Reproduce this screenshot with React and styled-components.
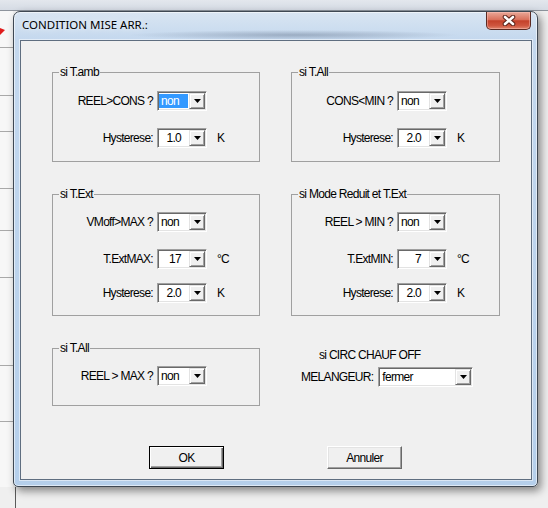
import React from "react"
import styled, { createGlobalStyle, css } from "styled-components"

const GlobalStyle = createGlobalStyle`
  html, body {
    margin: 0;
    padding: 0;
  }
  body {
    width: 548px;
    height: 508px;
    overflow: hidden;
    background: #f0f0f0;
    font-family: "Liberation Sans", Arial, sans-serif;
  }
`

// the dialog face uses a narrow bitmap-like font: squeeze Liberation Sans a bit
const dialogFont = css`
  font-family: "Liberation Sans", Arial, sans-serif;
  font-size: 12px;
  letter-spacing: -0.7px;
  color: #000;
`

// lines of the grid that lies behind the dialog (y relative to the strip top)
const stripLineYs = [36, 84, 120, 177, 219, 266, 354, 410]
const stripLines = stripLineYs
  .map(y => `linear-gradient(#a9a9a9, #a9a9a9) 0 ${y}px / 100% 1px no-repeat`)
  .join(", ")

const Desktop = styled.div`
  width: 548px;
  height: 508px;
  display: flex;
  flex-direction: column;
  background: #efefef;
  overflow: hidden;
`

const TopBand = styled.div`
  height: 10px;
  flex-shrink: 0;
  background: linear-gradient(#e3e7ed, #d5dbe4);
  border-bottom: 1px solid #8d939c;
`

const Middle = styled.div`
  display: flex;
  height: 476px;
  flex-shrink: 0;
`

const LeftStrip = styled.div`
  width: 13px;
  flex-shrink: 0;
  padding-top: 17px;
  box-sizing: border-box;
  background: ${stripLines}, #f7f7f7;
`

const BottomArea = styled.div`
  flex: 1;
  background: linear-gradient(#5a5a5a, #5a5a5a) 15px 0 / 1px 100% no-repeat, #efefef;
`

const Window = styled.div`
  position: relative;
  z-index: 1;
  width: 525px;
  height: 476px;
  box-sizing: border-box;
  display: flex;
  flex-direction: column;
  border: 1px solid #3f4853;
  border-radius: 7px 7px 5px 5px;
  background:
    radial-gradient(ellipse 165px 5px at 280px 23px, rgba(60, 75, 100, 0.32), transparent),
    linear-gradient(#d9e5f2 0, #c4d8ee 28px, #b5cfeb 100%);
  box-shadow: 3px 4px 9px rgba(0, 0, 0, 0.45), inset 0 0 0 1px rgba(255, 255, 255, 0.55);
`

const TitleBar = styled.div`
  height: 28px;
  flex-shrink: 0;
  display: flex;
  align-items: flex-start;
  justify-content: space-between;
  padding: 0 6px 0 8px;
`

const Title = styled.span`
  margin-top: 6px;
  font-family: "Noto Sans", "Open Sans", sans-serif;
  font-size: 11.5px;
  line-height: 14px;
  color: #000;
  text-shadow: 0 0 6px rgba(255, 255, 255, 0.95);
`

const CloseButton = styled.div`
  width: 45px;
  height: 18px;
  box-sizing: border-box;
  display: flex;
  align-items: center;
  justify-content: center;
  border: 1px solid #5b2a22;
  border-top: none;
  border-radius: 0 0 5px 5px;
  background: linear-gradient(#e9a898 0, #d9715c 45%, #c4412a 52%, #cf563f 80%, #e0866d 100%);
  box-shadow: inset 0 0 0 1px rgba(255, 200, 190, 0.45);
`

const Client = styled.div`
  flex: 1;
  margin: 0 5px 6px 6px;
  border: 1px solid #5f6e80;
  background: #f0f0f0;
  padding: 25px 0 0 31px;
  display: flex;
  flex-direction: column;
  box-shadow: 0 0 0 1px rgba(255, 255, 255, 0.5);
  ${dialogFont}
`

const Groups = styled.div`
  display: grid;
  grid-template-columns: 208px 209px;
  grid-template-rows: 96px 128px 64px;
  column-gap: 31px;
  row-gap: 26px;
`

const Group = styled.fieldset`
  margin: 0;
  padding: ${p => p.$pt}px 0 0 0;
  min-width: 0;
  box-sizing: border-box;
  border: 1px solid #a0a0a0;
`

const Legend = styled.legend`
  margin-left: 6px;
  padding: 0 1px;
  line-height: 12px;
`

const Row = styled.div`
  display: flex;
  align-items: center;
  height: 20px;
  margin-top: ${p => p.$mt || 0}px;
`

const Label = styled.span`
  flex-shrink: 0;
  box-sizing: border-box;
  white-space: nowrap;
  text-align: right;
  padding-right: ${p => (p.$w ? 4 : 5)}px;
  width: ${p => (p.$w ? `${p.$w}px` : "auto")};
`

const Unit = styled.span`
  margin-left: 10px;
`

const Combo = styled.div`
  box-sizing: border-box;
  width: ${p => p.$w}px;
  height: 20px;
  flex-shrink: 0;
  display: flex;
  background: #fff;
  border: 1px solid;
  border-color: #a0a0a0 #fff #fff #a0a0a0;
  box-shadow: inset 1px 1px 0 #696969, inset -1px -1px 0 #e3e3e3;
  padding: 1px;
`

const Value = styled.span`
  flex: 1;
  display: flex;
  align-items: center;
  justify-content: ${p => (p.$right ? "flex-end" : "flex-start")};
  padding: ${p => (p.$right ? "0 7px 0 0" : "0 0 0 2px")};
  margin: 1px 1px 1px 0;
  line-height: 14px;
  ${p => p.$selected && css`
    background: #3399ff;
    color: #fff;
  `}
`

const DropButton = styled.span`
  width: 16px;
  height: 16px;
  box-sizing: border-box;
  display: flex;
  align-items: center;
  justify-content: center;
  background: #f0f0f0;
  border: 1px solid;
  border-color: #e3e3e3 #696969 #696969 #e3e3e3;
  box-shadow: inset 1px 1px 0 #fff, inset -1px -1px 0 #a0a0a0;
`

const Note = styled.div`
  padding: 6px 0 0 28px;
  line-height: 14px;
`

const MixRow = styled(Row)`
  padding-left: 10px;
`

const Actions = styled.div`
  display: flex;
  gap: 103px;
  margin-top: 40px;
  padding-left: 97px;
`

const Button = styled.div`
  width: 75px;
  height: 23px;
  box-sizing: border-box;
  display: flex;
  align-items: center;
  justify-content: center;
  background: #f0f0f0;
  border: 1px solid;
  border-color: #fff #696969 #696969 #fff;
  box-shadow: inset -1px -1px 0 #a0a0a0, inset 1px 1px 0 #e3e3e3;
  ${p => p.$default && css`
    border-color: #000;
    box-shadow: inset 1px 1px 0 #fff, inset -1px -1px 0 #696969, inset -2px -2px 0 #a0a0a0;
  `}
`

const Arrow = () => (
  <svg width="7" height="4" viewBox="0 0 7 4">
    <polygon points="0,0 7,0 3.5,4" fill="#000" />
  </svg>
)

const CloseX = () => (
  <svg width="14" height="11" viewBox="0 0 14 11">
    <path d="M3 2 L11 9 M11 2 L3 9" stroke="#5a2219" strokeWidth="4.6" strokeLinecap="round" fill="none" />
    <path d="M3 2 L11 9 M11 2 L3 9" stroke="#fff" strokeWidth="2.6" strokeLinecap="round" fill="none" />
  </svg>
)

const RedMark = () => (
  <svg width="5" height="7" viewBox="0 0 5 7" style={{ display: "block" }}>
    <polygon points="0,0 5,2 0,7" fill="#e01b1b" />
  </svg>
)

const Select = ({ value, width = 50, right, selected }) => (
  <Combo $w={width}>
    <Value $right={right} $selected={selected}>{value}</Value>
    <DropButton><Arrow /></DropButton>
  </Combo>
)

const Field = ({ label, value, unit, right, selected, mt, labelWidth = 104 }) => (
  <Row $mt={mt}>
    <Label $w={labelWidth}>{label}</Label>
    <Select value={value} right={right} selected={selected} />
    {unit && <Unit>{unit}</Unit>}
  </Row>
)

export default function App() {
  return (
    <Desktop>
      <GlobalStyle />
      <TopBand />
      <Middle>
        <LeftStrip>
          <RedMark />
        </LeftStrip>
        <Window>
          <TitleBar>
            <Title>CONDITION MISE ARR.:</Title>
            <CloseButton><CloseX /></CloseButton>
          </TitleBar>
          <Client>
            <Groups>
              <Group $pt={13}>
                <Legend>si T.amb</Legend>
                <Field label="REEL>CONS ?" value="non" selected />
                <Field label="Hysterese:" value="1.0" unit="K" right mt={17} />
              </Group>

              <Group $pt={13}>
                <Legend>si T.All</Legend>
                <Field label="CONS<MIN ?" value="non" labelWidth={105} />
                <Field label="Hysterese:" value="2.0" unit="K" right mt={17} labelWidth={105} />
              </Group>

              <Group $pt={12}>
                <Legend>si T.Ext</Legend>
                <Field label="VMoff>MAX ?" value="non" />
                <Field label="T.ExtMAX:" value="17" unit="°C" right mt={17} />
                <Field label="Hysterese:" value="2.0" unit="K" right mt={14} />
              </Group>

              <Group $pt={12}>
                <Legend>si Mode Reduit et T.Ext</Legend>
                <Field label="REEL > MIN ?" value="non" labelWidth={105} />
                <Field label="T.ExtMIN:" value="7" unit="°C" right mt={17} labelWidth={105} />
                <Field label="Hysterese:" value="2.0" unit="K" right mt={14} labelWidth={105} />
              </Group>

              <Group $pt={12}>
                <Legend>si T.All</Legend>
                <Field label="REEL > MAX ?" value="non" />
              </Group>

              <div>
                <Note>si CIRC CHAUF OFF</Note>
                <MixRow $mt={5}>
                  <Label>MELANGEUR:</Label>
                  <Select value="fermer" width={95} />
                </MixRow>
              </div>
            </Groups>

            <Actions>
              <Button $default>OK</Button>
              <Button>Annuler</Button>
            </Actions>
          </Client>
        </Window>
      </Middle>
      <BottomArea />
    </Desktop>
  )
}
